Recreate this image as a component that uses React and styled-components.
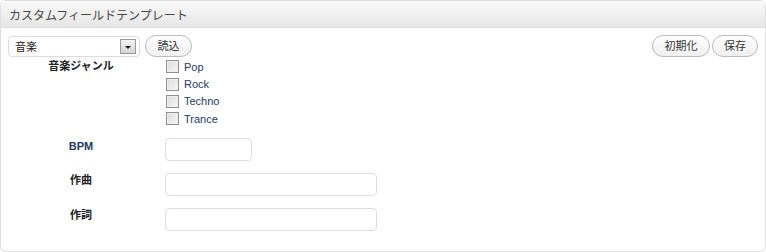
import React from "react";
import styled, { createGlobalStyle } from "styled-components";

const Global = createGlobalStyle`
  html, body { margin: 0; padding: 0; background: #fff; }
  body { font-family: "Liberation Sans", "Noto Sans CJK JP", sans-serif; color: #333; }
  * { box-sizing: border-box; }
`;

const jp = `"Liberation Sans", "Noto Sans CJK JP", sans-serif`;

const Panel = styled.div`
  width: 766px;
  height: 252px;
  border: 1px solid #dfdfdf;
  border-radius: 6px;
  overflow: hidden;
  background: #fff;
`;

const Header = styled.div`
  height: 27px;
  background: linear-gradient(#f9f9f9, #e6e6e6);
  border-bottom: 1px solid #dcdcdc;
  display: flex;
  align-items: center;
  padding-left: 8px;
  font-family: ${jp};
  font-size: 12px;
  color: #464646;
`;

const Toolbar = styled.div`
  display: flex;
  align-items: center;
  padding: 7px 6px 0 7px;
  gap: 5px;
`;

const Select = styled.div`
  width: 132px;
  height: 21px;
  border: 1px solid #dcdcdc;
  border-radius: 4px;
  display: flex;
  align-items: center;
  justify-content: space-between;
  padding: 0 3px 0 6px;
  font-family: ${jp};
  font-size: 11px;
  color: #222;
  background: #fff;
`;

const Arrow = styled.span`
  width: 16px;
  height: 15px;
  border: 1px solid #9a9a9a;
  background: linear-gradient(#f4f4f4, #d4d4d4);
  display: flex;
  align-items: center;
  justify-content: center;
  &::after {
    content: "";
    border-left: 3px solid transparent;
    border-right: 3px solid transparent;
    border-top: 3px solid #111;
    margin-top: 2px;
  }
`;

const Button = styled.button`
  height: 22px;
  padding: 0 ${(p) => p.$pad || 10}px;
  border: 1px solid #bbb;
  border-radius: 11px;
  background: linear-gradient(#ffffff, #efefef);
  font-family: ${jp};
  font-size: 11px;
  color: #333;
  line-height: 20px;
  cursor: pointer;
`;

const Spacer = styled.div`
  flex: 1;
`;

const RightGroup = styled.div`
  display: flex;
  gap: 2px;
  margin-right: 1px;
`;

const Form = styled.div`
  display: grid;
  grid-template-columns: 146px 1fr;
  column-gap: 10px;
  padding: 1px 8px 0 8px;
`;

const Label = styled.div`
  text-align: center;
  font-family: ${jp};
  font-size: 11px;
  line-height: 13px;
  font-weight: bold;
  color: ${(p) => (p.$latin ? "#233a66" : "#222")};
  padding-top: ${(p) => p.$pt || 0}px;
  padding-right: 2px;
`;

const Field = styled.div`
  margin-bottom: ${(p) => p.$mb || 0}px;
`;

const CheckList = styled.div`
  display: flex;
  flex-direction: column;
  padding-left: 1px;
`;

const CheckRow = styled.label`
  display: flex;
  align-items: center;
  height: 17.4px;
  gap: 5px;
  font-family: "Liberation Sans", sans-serif;
  font-size: 11px;
  color: #233a66;
`;

const Box = styled.span`
  width: 13px;
  height: 13px;
  border: 1px solid #8f8f8f;
  background: linear-gradient(135deg, #dcdcdc, #f6f6f6);
  box-shadow: inset 0 0 0 1px #f0f0f0;
`;

const Input = styled.input`
  width: ${(p) => p.$w}px;
  height: 23px;
  border: 1px solid #dedede;
  border-radius: 4px;
  background: #fff;
  outline: none;
`;

export default function App() {
  return (
    <>
      <Global />
      <Panel>
        <Header>カスタムフィールドテンプレート</Header>
        <Toolbar>
          <Select>
            音楽
            <Arrow />
          </Select>
          <Button $pad={11.5}>読込</Button>
          <Spacer />
          <RightGroup>
            <Button $pad={11.5}>初期化</Button>
            <Button $pad={11}>保存</Button>
          </RightGroup>
        </Toolbar>
        <Form>
          <Label $pt={2}>音楽ジャンル</Label>
          <Field $mb={10}>
            <CheckList>
              {["Pop", "Rock", "Techno", "Trance"].map((t) => (
                <CheckRow key={t}>
                  <Box />
                  {t}
                </CheckRow>
              ))}
            </CheckList>
          </Field>
          <Label $latin $pt={2}>BPM</Label>
          <Field $mb={12}>
            <Input $w={87} />
          </Field>
          <Label $pt={1}>作曲</Label>
          <Field $mb={12}>
            <Input $w={212} />
          </Field>
          <Label $pt={1}>作詞</Label>
          <Field>
            <Input $w={212} />
          </Field>
        </Form>
      </Panel>
    </>
  );
}
